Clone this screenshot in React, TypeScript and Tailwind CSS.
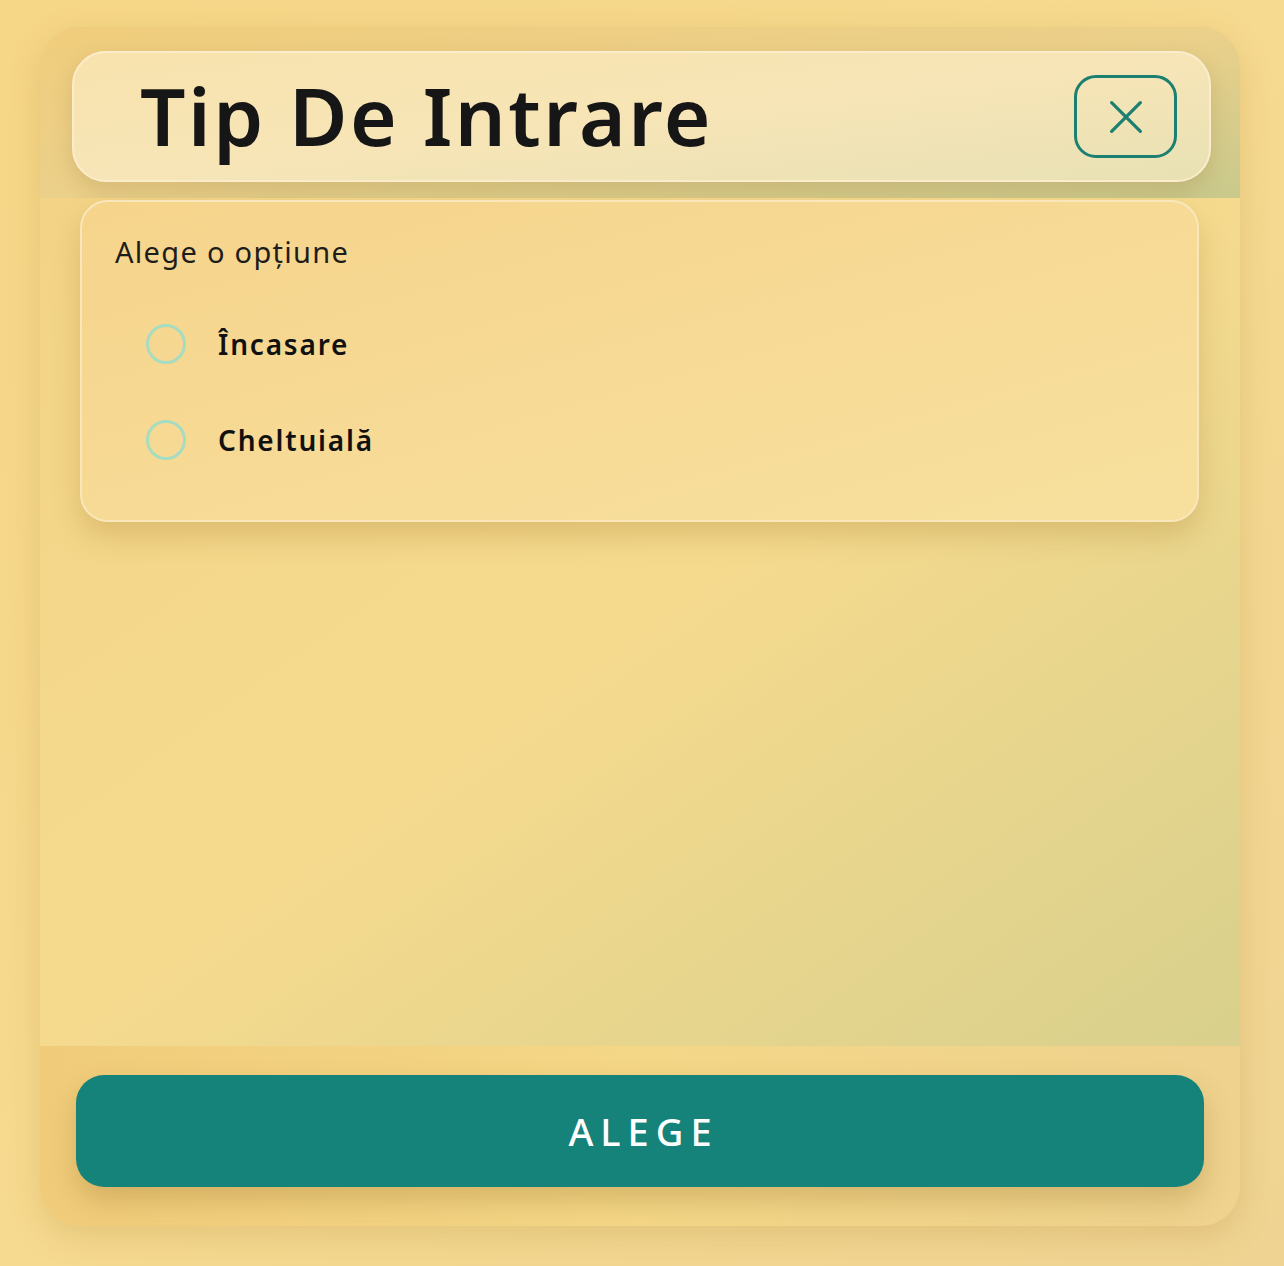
import { useState } from 'react';

const options = ['Încasare', 'Cheltuială'];

export default function App() {
  const [selected, setSelected] = useState<string | null>(null);

  return (
    <div className="min-h-[1266px] w-full bg-gradient-to-br from-[#f6d687] via-[#f6da8f] to-[#efd392] pt-[27px] px-[40px] font-['Noto_Sans',sans-serif]">
      <div className="w-[1200px] h-[1199px] rounded-[40px] overflow-hidden flex flex-col bg-[#f1d388] shadow-[0_10px_30px_rgba(180,140,60,0.25)]">
        {/* header */}
        <div className="h-[171px] bg-gradient-to-br from-[#f0cd7c] via-[#ebd08a] to-[#c8c98c] pt-[24px] pl-[32px] pr-[29px] pb-[16px]">
          <div className="h-full rounded-[34px] border-2 border-[#fbeccc] bg-gradient-to-br from-[#f8e3ad] via-[#f7e5b7] to-[#e8e1b4] shadow-[0_8px_20px_rgba(150,120,60,0.25)] flex items-center justify-between pl-[66px] pr-[32px]">
            <h1 className="text-[80px] leading-none font-semibold text-[#161616] tracking-[2.5px] pb-[4px]">Tip De Intrare</h1>
            <button className="w-[103px] h-[83px] rounded-[22px] border-[3px] border-[#1b7f71] flex items-center justify-center">
              <svg width="46" height="46" viewBox="0 0 24 24" fill="none" stroke="#1b7f71" strokeWidth="1.7" strokeLinecap="round">
                <path d="M4.5 4.5l15 15M19.5 4.5l-15 15" />
              </svg>
            </button>
          </div>
        </div>

        {/* body */}
        <div className="h-[848px] bg-gradient-to-br from-[#f3d486] via-[#f5da8e] to-[#d8d08c] pt-[2px] pl-[40px] pr-[41px]">
          <div className="h-[322px] rounded-[28px] border-2 border-[#f9e6bb] bg-gradient-to-br from-[#f6d48c] to-[#f7e09e] shadow-[0_14px_28px_rgba(170,130,50,0.3)] pl-[33px] pt-[35px]">
            <p className="text-[29px] leading-none text-[#1d1d1b] tracking-[1.3px]">Alege o opțiune</p>
            <div className="flex flex-col gap-[56px] mt-[58px] pl-[31px]">
              {options.map((opt) => (
                <label key={opt} className="flex items-center gap-[32px] cursor-pointer" onClick={() => setSelected(opt)}>
                  <span className="w-[40px] h-[40px] rounded-full border-[3px] border-[#a6dcc0] flex items-center justify-center">
                    {selected === opt && <span className="w-[20px] h-[20px] rounded-full bg-[#16837a]" />}
                  </span>
                  <span className="text-[28px] leading-none font-semibold text-[#111] tracking-[1.8px]">{opt}</span>
                </label>
              ))}
            </div>
          </div>
        </div>

        {/* footer */}
        <div className="flex-1 bg-gradient-to-r from-[#f0cc7a] via-[#f4d787] to-[#eed28e] pt-[29px] px-[36px]">
          <button className="w-full h-[112px] rounded-[28px] bg-[#15837a] shadow-[0_14px_28px_rgba(150,110,40,0.3)] text-white text-[38px] tracking-[7px] font-medium pl-[7px]">
            ALEGE
          </button>
        </div>
      </div>
    </div>
  );
}
